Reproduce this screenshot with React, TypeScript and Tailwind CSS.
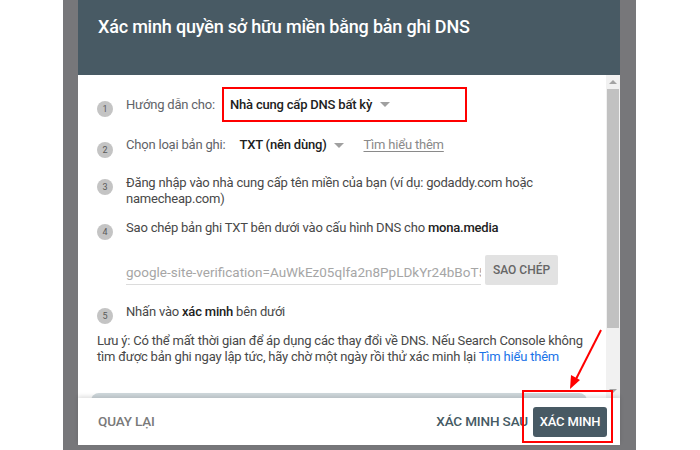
import * as React from 'react';

const font = { fontFamily: 'Roboto, "Noto Sans", Arial, sans-serif' };

function StepNum({ n, className = '' }: { n: number; className?: string }) {
  return (
    <div
      className={`w-[16px] h-[16px] shrink-0 rounded-full bg-[#c4c4c4] text-[#5a5a5a] text-[9px] leading-[16px] text-center tracking-normal ${className}`}
    >
      {n}
    </div>
  );
}

function Caret({ className = '' }: { className?: string }) {
  return (
    <span
      className={`inline-block w-0 h-0 border-l-[5px] border-r-[5px] border-t-[5px] border-l-transparent border-r-transparent border-t-[#a0a0a0] ${className}`}
    />
  );
}

export default function App() {
  return (
    <div className="relative w-[700px] h-[450px] bg-white overflow-hidden" style={font}>
      <div className="ml-[63px] w-[573px] h-[450px] bg-[#77777a] pl-[15px]">
        <div className="w-[542px] h-[445px] bg-white flex flex-col">
          {/* header */}
          <div className="h-[75px] shrink-0 bg-[#485a64] pl-[20px] pt-[14px]">
            <h1 className="text-[18px] leading-[26px] text-white font-medium tracking-[-0.2px]">
              Xác minh quyền sở hữu miền bằng bản ghi DNS
            </h1>
          </div>

          {/* body */}
          <div className="flex-1 flex overflow-hidden">
            <div className="flex-1 pl-[19px] pr-[14px] text-[13px] tracking-[-0.2px] text-[#484848]">
              <div className="mt-[12px] h-[35px] flex items-center">
                <StepNum n={1} className="mt-[8px]" />
                <span className="ml-[13px] text-[#5f6368]">Hướng dẫn cho:</span>
                <div className="ml-[7px] w-[245px] h-[35px] border-2 border-[#f00] flex items-center pl-[6px]">
                  <span className="text-[#212121] font-medium">Nhà cung cấp DNS bất kỳ</span>
                  <Caret className="ml-[8px]" />
                </div>
              </div>

              <div className="mt-[13px] flex items-start leading-[20px]">
                <StepNum n={2} className="mt-[7px] mb-[-3px]" />
                <span className="ml-[13px] text-[#5f6368]">Chọn loại bản ghi:</span>
                <span className="ml-[14px] text-[#212121] font-medium">TXT (nên dùng)</span>
                <Caret className="ml-[8px] mt-[8px]" />
                <span className="ml-[19px] text-[#8a8a8a] underline underline-offset-2">Tìm hiểu thêm</span>
              </div>

              <div className="mt-[20px] flex items-start leading-[16px]">
                <StepNum n={3} className="mt-[4px]" />
                <p className="ml-[13px] w-[430px]">
                  Đăng nhập vào nhà cung cấp tên miền của bạn (ví dụ: godaddy.com hoặc namecheap.com)
                </p>
              </div>

              <div className="mt-[13px] flex items-start leading-[16px]">
                <StepNum n={4} className="mt-[4px] mb-[-4px]" />
                <p className="ml-[13px]">
                  Sao chép bản ghi TXT bên dưới vào cấu hình DNS cho{' '}
                  <span className="text-[#212121] font-medium">mona.media</span>
                </p>
              </div>

              <div className="mt-[19px] flex items-end pl-[29px]">
                <div className="w-[355px] h-[30px] flex items-end overflow-hidden border-b border-[#dcdcdc] pb-[3px]">
                  <span className="whitespace-nowrap text-[13.5px] tracking-normal text-[#a6a6a6] leading-[18px]">
                    google-site-verification=AuWkEz05qlfa2n8PpLDkYr24bBoT5
                  </span>
                </div>
                <button className="ml-[4px] w-[73px] h-[30px] rounded-[2px] bg-[#e2e2e2] text-[#666] text-[12px] font-medium tracking-normal">
                  SAO CHÉP
                </button>
              </div>

              <div className="mt-[19px] flex items-start leading-[16px]">
                <StepNum n={5} className="mt-[4px] mb-[-4px]" />
                <p className="ml-[13px]">
                  Nhấn vào <span className="text-[#212121] font-medium">xác minh</span> bên dưới
                </p>
              </div>

              <p className="mt-[13px] leading-[16px] w-[495px]">
                Lưu ý: Có thể mất thời gian để áp dụng các thay đổi về DNS. Nếu Search Console không tìm
                được bản ghi ngay lập tức, hãy chờ một ngày rồi thử xác minh lại{' '}
                <span className="text-[#1a73e8]">Tìm hiểu thêm</span>
              </p>

              <div className="mt-[28px] ml-[-6px] w-[496px] h-[30px] rounded-[8px] bg-[#cfd8dc]" />
            </div>

            {/* scrollbar */}
            <div className="w-[14px] shrink-0 bg-[#f1f1f1] flex flex-col items-center">
              <div className="h-[14px] flex items-center justify-center">
                <span className="w-0 h-0 border-l-[4px] border-r-[4px] border-b-[4px] border-l-transparent border-r-transparent border-b-[#a3a3a3]" />
              </div>
              <div className="w-[12px] h-[239px] bg-[#c1c1c1]" />
              <div className="flex-1" />
              <div className="h-[14px] flex items-center justify-center">
                <span className="w-0 h-0 border-l-[4px] border-r-[4px] border-t-[4px] border-l-transparent border-r-transparent border-t-[#a3a3a3]" />
              </div>
            </div>
          </div>

          {/* footer */}
          <div className="relative h-[47px] shrink-0 flex items-center pl-[20px] pr-[13px] shadow-[0_-2px_4px_rgba(0,0,0,0.12)] text-[13.5px] tracking-[-0.15px] font-medium">
            <span className="text-[#7a7a7a]">QUAY LẠI</span>
            <div className="flex-1" />
            <span className="text-[#455a64]">XÁC MINH SAU</span>
            <button className="ml-[5px] w-[74px] h-[30px] rounded-[3px] bg-[#485a64] text-white text-[13px]">
              XÁC MINH
            </button>
          </div>
        </div>
      </div>

      {/* annotations */}
      <div className="absolute left-[522px] top-[390px] w-[91px] h-[53px] border-2 border-[#f00]" />
      <svg className="absolute left-[560px] top-[325px]" width="50" height="70" viewBox="0 0 50 70">
        <line x1="41" y1="5" x2="15" y2="56" stroke="#f00" strokeWidth="2" />
        <polygon points="10,64 11,50 20,55" fill="#f00" />
      </svg>
    </div>
  );
}
